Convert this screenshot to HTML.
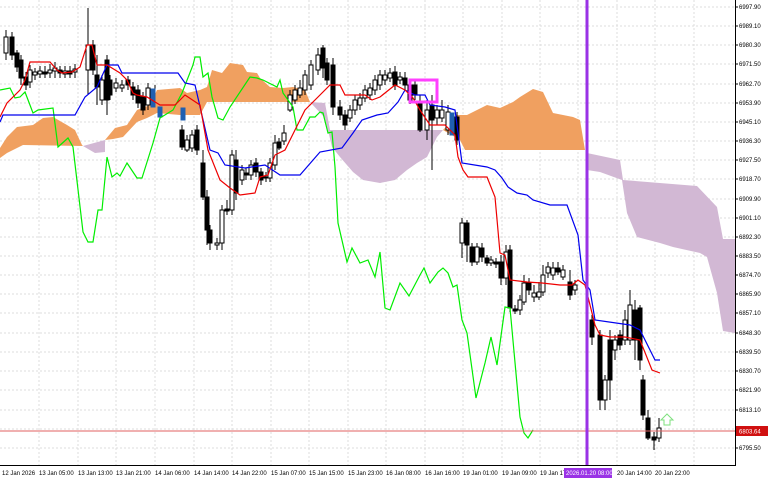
<!DOCTYPE html>
<html><head><meta charset="utf-8"><style>
html,body{margin:0;padding:0;background:#fff;}
svg{display:block;font-family:"Liberation Sans",sans-serif;}
.b{fill:#000;stroke:#000;stroke-width:1}
.w{fill:#fff;stroke:#000;stroke-width:1}
.bl{fill:#1f5fb0;stroke:#1f5fb0}
.ax{font-size:6px;fill:#000}
</style></head><body>
<svg width="768" height="480" viewBox="0 0 768 480" xmlns="http://www.w3.org/2000/svg">
<rect width="768" height="480" fill="#fff"/>
<g stroke="#dcdcdc" stroke-width="1" stroke-dasharray="2,2">
<path d="M0 7H735M0 26H735M0 45H735M0 64H735M0 84H735M0 103H735M0 122H735M0 141H735M0 160H735M0 179H735M0 199H735M0 218H735M0 237H735M0 256H735M0 275H735M0 294H735M0 313H735M0 333H735M0 352H735M0 371H735M0 390H735M0 410H735M0 429H735M0 448H735"/>
<path d="M39 0V466M78 0V466M116 0V466M155 0V466M194 0V466M232 0V466M271 0V466M309 0V466M348 0V466M386 0V466M425 0V466M463 0V466M502 0V466M540 0V466M578 0V466M617 0V466M655 0V466M694 0V466"/>
</g>
<!-- clouds -->
<polygon fill="#f0a060" points="0,148 7,137 17,127 33,125 43,118 53,117 67,125 75,130 82,145 83,146 23,145 7,153 0,158"/>
<polygon fill="#d2b8d4" points="83,146 105,140 105,152 95,153"/>
<polygon fill="#f0a060" points="105,140 115,128 127,125 137,110 150,105 157,90 180,88 187,93 200,90 207,87 212,70 222,73 230,63 243,65 247,72 257,73 260,78 270,87 283,88 293,87 305,90 310,102 300,102 250,102 207,102 200,115 180,115 157,113 147,118 137,122 123,137 113,139"/>
<polygon fill="#d2b8d4" points="310,102 325,103 330,130 443,130 437,137 427,157 417,163 407,170 395,180 380,183 363,180 353,172 340,157 332,147 325,118"/>
<polygon fill="#f0a060" points="443,130 457,115 467,115 477,110 487,105 500,108 513,102 520,97 533,89 543,92 553,113 573,117 580,120 585,150 465,150 460,140"/>
<polygon fill="#d2b8d4" points="587,153 620,160 623,180 697,186 717,207 723,239 735,239 735,333 723,331 717,293 707,257 700,253 673,247 660,243 637,237 627,213 622,180 600,172 587,170"/>
<!-- wicks -->
<path stroke="#000" stroke-width="1" fill="none" d="M6 30V60M12 32V60M17 50V72M21 55V85M26 72V90M30 65V88M35 68V80M40 66V78M45 66V78M50 64V78M55 62V78M60 66V78M65 66V78M70 66V78M75 64V78M88 8V95M93 40V75M97 55V105M102 75V105M107 55V115M110 75V100M116 78V92M122 80V92M128 76V90M133 82V100M138 85V108M143 92V115M148 83V110M155 85V103M182 125V150M187 135V152M192 130V152M197 125V155M203 150V200M207 190V245M210 225V250M217 238V250M222 205V250M227 200V215M232 150V215M236 150V200M242 165V185M246 168V180M251 160V180M256 158V177M261 168V185M266 172V182M270 158V182M275 135V170M279 138V150M284 125V145M290 90V112M295 85V104M300 80V98M305 70V95M311 60V90M318 48V75M323 45V78M327 58V85M333 58V115M340 100V120M345 110V130M350 105V122M355 95V115M360 93V110M365 85V102M370 83V100M375 75V95M380 70V90M385 70V85M390 68V82M395 66V90M400 72V84M405 72V90M410 80V104M415 80V100M420 95V132M427 100V140M432 95V170M437 105V125M442 100V122M448 105V135M457 112V145M462 218V258M467 220V262M472 243V266M477 243V265M482 243V262M487 255V266M491 256V266M496 258V268M501 255V285M506 245V285M510 245V312M515 305V314M520 295V315M524 275V305M529 278V295M534 285V302M539 282V300M543 265V296M548 262V278M553 262V280M558 262V275M563 265V280M570 270V300M575 280V295M592 315V345M600 330V410M605 375V410M610 330V400M615 335V360M620 330V350M625 310V345M630 290V345M635 300V360M640 305V370M643 375V420M648 410V440M654 432V450M659 418V442"/>
<g>
<rect class="w" x="4" y="37" width="4" height="16"/><rect class="b" x="10" y="37" width="4" height="18"/><rect class="b" x="15" y="53" width="4" height="14"/><rect class="b" x="19" y="60" width="4" height="18"/><rect class="b" x="24" y="77" width="4" height="8"/><rect class="w" x="28" y="70" width="4" height="12"/>
<rect class="w" x="33" y="72" width="4" height="3"/><rect class="w" x="38" y="71" width="4" height="3"/><rect class="b" x="43" y="72" width="4" height="2"/><rect class="w" x="48" y="70" width="4" height="3"/><rect class="w" x="53" y="68" width="4" height="3"/><rect class="b" x="58" y="70" width="4" height="3"/><rect class="w" x="63" y="71" width="4" height="3"/><rect class="b" x="68" y="71" width="4" height="3"/><rect class="w" x="73" y="69" width="4" height="3"/>
<rect class="w" x="86" y="45" width="4" height="25"/><rect class="b" x="91" y="45" width="4" height="25"/><rect class="b" x="95" y="75" width="4" height="12"/><rect class="w" x="100" y="80" width="4" height="20"/><rect class="b" x="105" y="60" width="4" height="40"/><rect class="b" x="108" y="80" width="4" height="15"/><rect class="w" x="114" y="83" width="4" height="5"/><rect class="w" x="120" y="85" width="4" height="3"/><rect class="b" x="126" y="80" width="4" height="5"/><rect class="b" x="131" y="87" width="4" height="8"/><rect class="b" x="136" y="90" width="4" height="13"/><rect class="b" x="141" y="97" width="4" height="13"/><rect class="w" x="146" y="88" width="4" height="17"/><rect class="bl" x="151" y="89" width="4" height="18"/><rect class="bl" x="158" y="107" width="4" height="10"/><rect class="bl" x="181" y="108" width="4" height="12"/>
<rect class="b" x="180" y="130" width="4" height="17"/><rect class="w" x="185" y="140" width="4" height="10"/><rect class="w" x="190" y="135" width="4" height="13"/><rect class="b" x="195" y="130" width="4" height="20"/><rect class="b" x="201" y="163" width="4" height="34"/><rect class="b" x="205" y="197" width="4" height="33"/><rect class="b" x="208" y="230" width="4" height="13"/><rect class="w" x="215" y="243" width="4" height="2"/><rect class="w" x="220" y="210" width="4" height="33"/><rect class="b" x="225" y="209" width="4" height="2"/><rect class="w" x="230" y="155" width="4" height="55"/><rect class="b" x="234" y="160" width="4" height="33"/><rect class="w" x="240" y="170" width="4" height="10"/><rect class="b" x="244" y="173" width="4" height="2"/><rect class="w" x="249" y="165" width="4" height="10"/><rect class="b" x="254" y="163" width="4" height="9"/><rect class="b" x="259" y="172" width="4" height="8"/><rect class="b" x="264" y="177" width="4" height="1"/><rect class="w" x="268" y="163" width="4" height="15"/><rect class="w" x="273" y="143" width="4" height="22"/><rect class="b" x="277" y="142" width="4" height="6"/><rect class="w" x="282" y="133" width="4" height="8"/>
<rect class="w" x="288" y="95" width="4" height="15"/><rect class="w" x="293" y="90" width="4" height="10"/><rect class="w" x="298" y="88" width="4" height="7"/><rect class="w" x="303" y="75" width="4" height="15"/><rect class="w" x="309" y="65" width="4" height="20"/><rect class="w" x="316" y="55" width="4" height="15"/><rect class="b" x="321" y="48" width="4" height="20"/><rect class="b" x="325" y="63" width="4" height="17"/><rect class="b" x="331" y="65" width="4" height="42"/><rect class="b" x="338" y="107" width="4" height="8"/><rect class="b" x="343" y="115" width="4" height="10"/><rect class="w" x="348" y="110" width="4" height="8"/><rect class="w" x="353" y="100" width="4" height="10"/><rect class="w" x="358" y="98" width="4" height="7"/><rect class="w" x="363" y="90" width="4" height="8"/><rect class="w" x="368" y="88" width="4" height="7"/><rect class="w" x="373" y="80" width="4" height="10"/><rect class="w" x="378" y="75" width="4" height="10"/><rect class="w" x="383" y="75" width="4" height="5"/><rect class="w" x="388" y="73" width="4" height="5"/><rect class="b" x="393" y="72" width="4" height="13"/><rect class="w" x="398" y="77" width="4" height="3"/><rect class="b" x="403" y="78" width="4" height="7"/><rect class="w" x="408" y="85" width="4" height="15"/><rect class="b" x="413" y="85" width="4" height="10"/><rect class="b" x="418" y="103" width="4" height="27"/><rect class="w" x="425" y="110" width="4" height="20"/><rect class="b" x="430" y="105" width="4" height="15"/><rect class="w" x="435" y="110" width="4" height="8"/><rect class="w" x="440" y="110" width="4" height="8"/><rect class="w" x="446" y="112" width="4" height="18"/><rect class="bl" x="450" y="113" width="4" height="22"/><rect class="b" x="455" y="117" width="4" height="23"/>
<rect class="w" x="460" y="223" width="4" height="20"/><rect class="b" x="465" y="223" width="4" height="22"/><rect class="b" x="470" y="247" width="4" height="15"/><rect class="w" x="475" y="247" width="4" height="15"/><rect class="b" x="480" y="248" width="4" height="9"/><rect class="b" x="485" y="258" width="4" height="5"/><rect class="w" x="489" y="260" width="4" height="3"/><rect class="b" x="494" y="262" width="4" height="2"/><rect class="b" x="499" y="262" width="4" height="16"/><rect class="w" x="504" y="252" width="4" height="26"/><rect class="b" x="508" y="250" width="4" height="58"/><rect class="b" x="513" y="309" width="4" height="2"/><rect class="w" x="518" y="300" width="4" height="10"/><rect class="w" x="522" y="283" width="4" height="19"/><rect class="b" x="527" y="283" width="4" height="7"/><rect class="w" x="532" y="293" width="4" height="4"/><rect class="w" x="537" y="292" width="4" height="5"/><rect class="w" x="541" y="275" width="4" height="17"/><rect class="w" x="546" y="267" width="4" height="6"/><rect class="w" x="551" y="268" width="4" height="7"/><rect class="b" x="556" y="268" width="4" height="4"/><rect class="w" x="561" y="270" width="4" height="7"/><rect class="b" x="568" y="282" width="4" height="13"/><rect class="w" x="573" y="285" width="4" height="5"/>
<rect class="b" x="590" y="320" width="4" height="17"/><rect class="b" x="598" y="335" width="4" height="65"/><rect class="w" x="603" y="380" width="4" height="20"/><rect class="b" x="608" y="340" width="4" height="40"/><rect class="w" x="613" y="340" width="4" height="10"/><rect class="b" x="618" y="335" width="4" height="10"/><rect class="w" x="623" y="320" width="4" height="20"/><rect class="w" x="628" y="305" width="4" height="35"/><rect class="b" x="633" y="310" width="4" height="30"/><rect class="b" x="638" y="308" width="4" height="52"/><rect class="b" x="641" y="380" width="4" height="35"/><rect class="b" x="646" y="418" width="4" height="20"/><rect class="b" x="652" y="437" width="4" height="3"/><rect class="w" x="657" y="428" width="4" height="10"/>
</g>
<!-- lines -->
<polyline fill="none" stroke="#00ee00" stroke-width="1.2" points="0,90 10,88 15,98 20,97 25,92 33,113 38,110 53,108 58,147 68,138 73,147 83,232 88,242 93,242 98,210 102,210 107,157 112,177 117,173 120,176 127,163 137,178 142,178 153,143 160,118 173,110 182,93 193,65 195,57 200,57 203,77 208,73 212,97 218,118 223,120 230,107 250,77 257,78 263,80 277,87 280,80 283,93 293,107 297,130 303,130 310,117 315,117 320,112 323,113 328,133 332,132 335,167 338,223 347,262 352,248 360,263 368,260 375,277 380,252 385,308 390,310 400,283 409,296 420,275 424,268 430,283 438,272 443,268 448,273 453,287 457,285 462,320 467,333 476,398 485,363 491,337 497,365 505,307 510,308 520,417 524,433 528,438 533,430"/>
<polyline fill="none" stroke="#0000ee" stroke-width="1.2" points="0,122 3,115 75,115 85,97 97,87 107,65 118,65 122,73 178,73 185,83 195,85 210,150 218,153 225,165 245,168 265,165 280,175 300,175 320,152 342,148 353,133 362,120 377,115 388,113 398,102 405,90 415,95 425,95 430,105 445,107 455,110 462,163 487,167 495,170 502,178 508,187 517,193 527,195 533,200 550,205 567,205 578,235 583,280 590,290 595,320 630,325 640,330 655,360 660,360"/>
<polyline fill="none" stroke="#ee0000" stroke-width="1.2" points="0,117 7,103 20,90 25,80 30,62 50,62 57,70 62,73 72,72 80,67 87,45 92,45 97,65 107,65 120,73 127,80 133,93 137,95 147,97 160,105 175,105 185,95 200,105 208,150 220,180 230,188 240,195 255,193 260,177 268,175 275,155 285,150 295,130 305,110 320,95 330,85 340,85 345,95 365,95 372,100 380,97 395,85 405,90 413,98 420,110 430,125 445,125 455,135 458,157 463,170 468,177 487,177 495,197 500,253 505,255 510,280 527,282 542,283 560,285 572,285 578,280 585,285 595,325 600,335 610,337 625,337 640,340 652,370 660,373"/>
<rect x="410" y="80" width="27" height="22" fill="none" stroke="#ff40ff" stroke-width="3"/>
<line x1="0" y1="431" x2="735" y2="431" stroke="#e06060" stroke-width="1"/>
<rect x="585.5" y="0" width="3" height="466" fill="#9a32e6"/>
<path d="M664 425V420H661L667 414L673 420H670V425Z" fill="#fff" stroke="#7ee07e" stroke-width="1"/>
<line x1="735.5" y1="0" x2="735.5" y2="466" stroke="#000"/>
<line x1="0" y1="465.5" x2="736" y2="465.5" stroke="#000"/>
<g stroke="#000"><path d="M735 7h3M735 26h3M735 45h3M735 64h3M735 84h3M735 103h3M735 122h3M735 141h3M735 160h3M735 179h3M735 199h3M735 218h3M735 237h3M735 256h3M735 275h3M735 294h3M735 313h3M735 333h3M735 352h3M735 371h3M735 390h3M735 410h3M735 448h3"/></g>
<g class="ax">
<text x="739" y="9">6997.90</text><text x="739" y="28">6989.10</text><text x="739" y="47">6980.30</text><text x="739" y="66">6971.50</text><text x="739" y="86">6962.70</text><text x="739" y="105">6953.90</text><text x="739" y="124">6945.10</text><text x="739" y="143">6936.30</text><text x="739" y="162">6927.50</text><text x="739" y="181">6918.70</text><text x="739" y="201">6909.90</text><text x="739" y="220">6901.10</text><text x="739" y="239">6892.30</text><text x="739" y="258">6883.50</text><text x="739" y="277">6874.70</text><text x="739" y="296">6865.90</text><text x="739" y="315">6857.10</text><text x="739" y="335">6848.30</text><text x="739" y="354">6839.50</text><text x="739" y="373">6830.70</text><text x="739" y="392">6821.90</text><text x="739" y="412">6813.10</text><text x="739" y="450">6795.50</text>
</g>
<rect x="736" y="426" width="32" height="10" fill="#d01010"/>
<text x="739" y="433.5" font-size="6" fill="#fff">6803.64</text>
<g class="ax">
<text x="2" y="475">12 Jan 2026</text><text x="39" y="475">13 Jan 05:00</text><text x="78" y="475">13 Jan 13:00</text><text x="116" y="475">13 Jan 21:00</text><text x="155" y="475">14 Jan 06:00</text><text x="194" y="475">14 Jan 14:00</text><text x="232" y="475">14 Jan 22:00</text><text x="271" y="475">15 Jan 07:00</text><text x="309" y="475">15 Jan 15:00</text><text x="348" y="475">15 Jan 23:00</text><text x="386" y="475">16 Jan 08:00</text><text x="425" y="475">16 Jan 16:00</text><text x="463" y="475">19 Jan 01:00</text><text x="502" y="475">19 Jan 09:00</text><text x="540" y="475">19 Jan 17:00</text><text x="617" y="475">20 Jan 14:00</text><text x="655" y="475">20 Jan 22:00</text>
</g>
<rect x="564" y="468" width="48" height="10" fill="#9a32e6"/>
<text x="566" y="475" font-size="6" fill="#fff">2026.01.20 08:00</text>
</svg>
</body></html>
